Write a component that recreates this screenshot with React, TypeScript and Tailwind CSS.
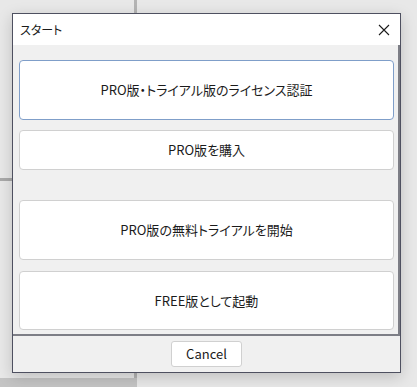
import React from 'react';

const font = {
  fontFamily: '"Noto Sans CJK JP", "Noto Sans", sans-serif',
  fontFeatureSettings: '"palt"',
};

const OptionButton = ({ label, className = '', focused = false }: { label: string; className?: string; focused?: boolean }) => (
  <button
    className={`w-full flex items-center justify-center rounded-[4px] bg-white text-[13px] text-[#1b1b1b] ${
      focused ? 'border border-[#7f9ec9]' : 'border border-[#d0d0d0]'
    } ${className}`}
  >
    {label}
  </button>
);

export default function App() {
  return (
    <div className="relative w-[417px] h-[387px] overflow-hidden bg-[#e8e8e8]" style={font}>
      {/* app behind the dialog */}
      <div className="absolute left-[134px] top-0 w-[3px] h-[387px] bg-[#b4b4b4]" />
      <div className="absolute left-0 top-[178px] w-[14px] h-[3px] bg-[#a9a9a9]" />
      <div className="absolute left-0 top-[378px] w-[137px] h-[9px] bg-[#c4c4c4]" />

      <div className="absolute left-[12px] top-[13px] w-[389px] h-[360px] flex flex-col border border-[#4e5060] bg-[#f0f0f0] shadow-[0_4px_14px_rgba(0,0,0,0.18)]">
        {/* title bar */}
        <div className="h-[31px] shrink-0 bg-white flex items-center justify-between pl-[7px] pr-[10px]">
          <span className="text-[12px] text-[#1b1b1b]">スタート</span>
          <svg width="12" height="12" viewBox="0 0 12 12" className="text-[#1b1b1b]">
            <path d="M1 1 L11 11 M11 1 L1 11" stroke="currentColor" strokeWidth="1.1" fill="none" />
          </svg>
        </div>

        {/* options */}
        <div className="h-[291px] shrink-0 flex flex-col pt-[15px] pl-[6px] pr-[4px] border-r-2 border-b-2 border-[#7d7e86] bg-[#f0f0f0]">
          <OptionButton label="PRO版・トライアル版のライセンス認証" focused className="h-[60px]" />
          <OptionButton label="PRO版を購入" className="h-[40px] mt-[10px]" />
          <OptionButton label="PRO版の無料トライアルを開始" className="h-[60px] mt-[30px]" />
          <OptionButton label="FREE版として起動" className="h-[59px] mt-[11px]" />
        </div>

        {/* footer */}
        <div className="flex-1 flex items-center justify-center">
          <button className="w-[71px] h-[26px] rounded-[3px] bg-white border border-[#d0d0d0] text-[13px] text-[#1b1b1b]">
            Cancel
          </button>
        </div>
      </div>
    </div>
  );
}
